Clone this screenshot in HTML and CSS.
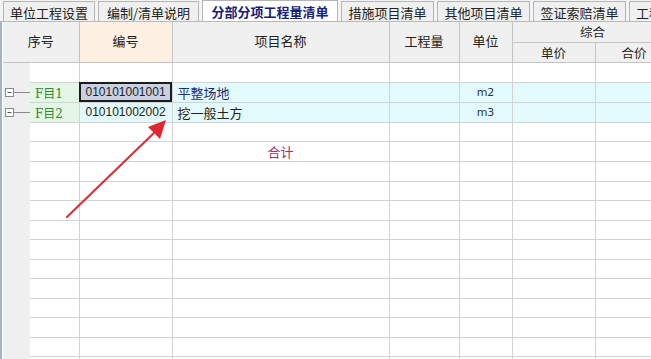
FILE: index.html
```html
<!DOCTYPE html>
<html lang="zh-CN">
<head>
<meta charset="UTF-8">
<title>分部分项工程量清单</title>
<link rel="stylesheet" href="styles.css">
</head>
<body>

<div class="tabs">
    <div class="tab w1">单位工程设置</div>
    <div class="tab w2">编制/清单说明</div>
    <div class="tab w3 active">分部分项工程量清单</div>
    <div class="tab w4">措施项目清单</div>
    <div class="tab w5">其他项目清单</div>
    <div class="tab w6">签证索赔清单</div>
    <div class="tab w7">工程</div>
</div>

<div class="sheet">
    <table class="grid">
        <colgroup>
            <col style="width:27px">
            <col style="width:49px">
            <col style="width:93px">
            <col style="width:217px">
            <col style="width:70px">
            <col style="width:53px">
            <col style="width:83px">
            <col style="width:78px">
        </colgroup>
        <thead>
            <tr class="h1">
                <th colspan="2" rowspan="2">序号</th>
                <th rowspan="2" class="peach">编号</th>
                <th rowspan="2">项目名称</th>
                <th rowspan="2">工程量</th>
                <th rowspan="2">单位</th>
                <th colspan="2" class="sub">综合</th>
            </tr>
            <tr class="h2">
                <th class="sub">单价</th>
                <th class="sub">合价</th>
            </tr>
        </thead>
        <tbody>
            <tr><td class="gut"></td><td></td><td></td><td></td><td></td><td></td><td></td><td></td></tr>
            <tr class="item">
                <td class="gut"><svg class="tree" width="27" height="19" viewBox="0 0 27 19"><rect x="2.5" y="5.5" width="8" height="8" fill="#fff" stroke="#8a8a8a"/><line x1="4.5" y1="9.5" x2="8.5" y2="9.5" stroke="#555"/><line x1="11" y1="9.5" x2="27" y2="9.5" stroke="#8a8a8a"/></svg></td>
                <td class="seq">F目1</td>
                <td class="code picked">010101001001</td>
                <td class="name navy">平整场地</td>
                <td></td>
                <td class="unit">m2</td>
                <td></td><td></td>
            </tr>
            <tr class="item">
                <td class="gut"><svg class="tree" width="27" height="19" viewBox="0 0 27 19"><rect x="2.5" y="5.5" width="8" height="8" fill="#fff" stroke="#8a8a8a"/><line x1="4.5" y1="9.5" x2="8.5" y2="9.5" stroke="#555"/><line x1="11" y1="9.5" x2="27" y2="9.5" stroke="#8a8a8a"/></svg></td>
                <td class="seq">F目2</td>
                <td class="code">010101002002</td>
                <td class="name">挖一般土方</td>
                <td></td>
                <td class="unit">m3</td>
                <td></td><td></td>
            </tr>
            <tr><td class="gut"></td><td></td><td></td><td></td><td></td><td></td><td></td><td></td></tr>
            <tr><td class="gut"></td><td></td><td></td><td class="total">合计</td><td></td><td></td><td></td><td></td></tr>
            <tr><td class="gut"></td><td></td><td></td><td></td><td></td><td></td><td></td><td></td></tr>
            <tr><td class="gut"></td><td></td><td></td><td></td><td></td><td></td><td></td><td></td></tr>
            <tr><td class="gut"></td><td></td><td></td><td></td><td></td><td></td><td></td><td></td></tr>
            <tr><td class="gut"></td><td></td><td></td><td></td><td></td><td></td><td></td><td></td></tr>
            <tr><td class="gut"></td><td></td><td></td><td></td><td></td><td></td><td></td><td></td></tr>
            <tr><td class="gut"></td><td></td><td></td><td></td><td></td><td></td><td></td><td></td></tr>
            <tr><td class="gut"></td><td></td><td></td><td></td><td></td><td></td><td></td><td></td></tr>
            <tr><td class="gut"></td><td></td><td></td><td></td><td></td><td></td><td></td><td></td></tr>
            <tr><td class="gut"></td><td></td><td></td><td></td><td></td><td></td><td></td><td></td></tr>
            <tr><td class="gut"></td><td></td><td></td><td></td><td></td><td></td><td></td><td></td></tr>
            <tr><td class="gut"></td><td></td><td></td><td></td><td></td><td></td><td></td><td></td></tr>
        </tbody>
    </table>

    <!-- red pointer drawn over the grid -->
    <svg class="arrow" width="651" height="359" viewBox="0 0 651 359">
        <line x1="68" y1="217" x2="157" y2="131" stroke="#d8333a" stroke-width="2.2" stroke-linecap="round"/>
        <polygon points="167,120 149,127 161,139" fill="#e0262f"/>
    </svg>
</div>

</body>
</html>
```

FILE: styles.css
```css
body {
    margin: 0;
    width: 651px;
    height: 359px;
    overflow: hidden;
    background: #fff;
    font-family: "Noto Sans CJK SC", "Liberation Sans", sans-serif;
    font-size: 13px;
    color: #222;
}
.tabs {
    display: flex;
    gap: 3px;
    height: 22px;
    padding-left: 3px;
    background: #f4f4f4;
    border-bottom: 1px solid #b9b9b9;
    box-sizing: border-box;
    overflow: hidden;
}
.tab {
    flex: none;
    height: 21px;
    line-height: 21px;
    margin-top: 1px;
    text-align: center;
    background: #f0f0f0;
    border: 1px solid #b5b5b5;
    border-bottom: none;
    box-sizing: border-box;
    white-space: nowrap;
    overflow: hidden;
    color: #222;
}
.tab.active {
    background: #fff;
    color: #16207a;
    font-weight: bold;
    height: 22px;
    margin-top: 0;
}
.w1 { width: 92px; }
.w2 { width: 101px; }
.w3 { width: 136px; }
.w4 { width: 93px; }
.w5 { width: 93px; }
.w6 { width: 93px; }
.w7 { width: 40px; text-align: left; padding-left: 6px; }

.sheet {
    position: relative;
    height: 337px;
    overflow: hidden;
    border-left: 2px solid #a9b3bd;
    padding-left: 1px;
}
.grid {
    table-layout: fixed;
    border-collapse: collapse;
    width: 670px;
}
.grid th {
    background: #f0f0f0;
    font-weight: normal;
    border-right: 1px solid #c4c4c4;
    border-bottom: 1px solid #c4c4c4;
    padding: 0;
    color: #222;
}
.grid th.peach {
    background: #fdefe2;
}
.h1 th {
    height: 20px;
}
.h2 th {
    height: 19px;
}
.grid th.sub {
    line-height: 18px;
    font-size: 12.5px;
}
.h1 th[rowspan] {
    padding-bottom: 4px;
}
.grid td {
    height: 18.5px;
    padding: 0;
    border-right: 1px solid #d2d2d2;
    border-bottom: 1px solid #d2d2d2;
    white-space: nowrap;
    overflow: hidden;
}
.grid td.gut {
    background: #efefef;
    border-right: none;
    border-bottom: none;
    vertical-align: middle;
}
.tree {
    display: block;
}
.item td {
    background: #e2fafb;
}
.item td.gut {
    background: #efefef;
}
.item td.seq {
    background: #e4f7e6;
    color: #2d8a33;
    padding-left: 5px;
    font-family: "DejaVu Serif", "Noto Sans CJK SC", serif;
    font-size: 12px;
}
.code {
    font-family: "Liberation Sans", sans-serif;
    font-size: 12px;
    text-align: center;
}
.item td.picked {
    background: #c9d0e2;
    outline: 2px solid #1c1c1c;
    outline-offset: -2px;
}
.name {
    padding-left: 5px !important;
}
.navy {
    color: #1d2b7a;
}
.unit {
    text-align: center;
    font-family: "DejaVu Sans", sans-serif;
    font-size: 11px;
    color: #2a3550;
}
.total {
    text-align: center;
    color: #a0306a;
}
.arrow {
    position: absolute;
    left: -3px;
    top: -22px;
    pointer-events: none;
}
```
